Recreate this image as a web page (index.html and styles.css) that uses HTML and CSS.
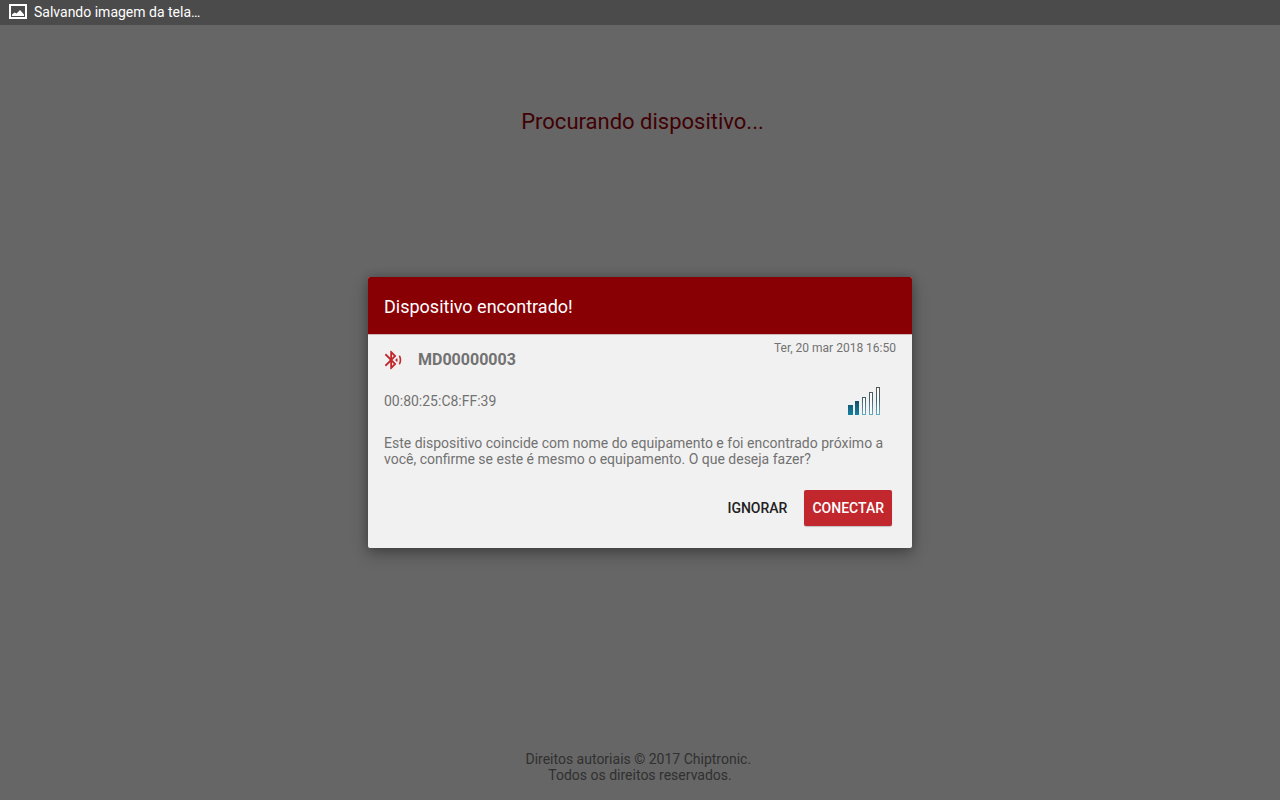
FILE: index.html
```
<!DOCTYPE html>
<html lang="pt-BR">
<head>
    <meta charset="UTF-8">
    <meta name="viewport" content="width=device-width, initial-scale=1.0">
    <title>Procurando dispositivo</title>
    <link rel="stylesheet" href="styles.css">
</head>
<body>
    <div class="status-bar">
        <svg class="status-icon" viewBox="0 0 18 15" aria-hidden="true">
            <rect x="1" y="1" width="16" height="13" fill="none" stroke="#fff" stroke-width="2"/>
            <path d="M3 12V10.500l2.500-2 2 1L11 6l4 4.500V12z" fill="#fff"/>
        </svg>
        <span>Salvando imagem da tela…</span>
    </div>
    <div class="tela">
        <h1 class="procurando">Procurando dispositivo...</h1>
        <footer class="rodape">Direitos autoriais © 2017 Chiptronic.&nbsp;<br>Todos os direitos reservados.</footer>

        <div class="fundo">
            <div class="dialogo" role="dialog" aria-labelledby="titulo">
                <h2 class="titulo" id="titulo">Dispositivo encontrado!</h2>
                <div class="conteudo">
                    <div class="linha">
                        <div class="dispositivo">
                            <svg class="bluetooth" viewBox="0 0 24 24" aria-hidden="true">
                                <path d="M14.24 12.01l2.32 2.32c.28-.72.44-1.51.44-2.33 0-.82-.16-1.59-.43-2.31l-2.33 2.32zm5.29-5.3l-1.26 1.26c.63 1.21.98 2.57.98 4.02s-.36 2.82-.98 4.02l1.2 1.2c.97-1.54 1.54-3.36 1.54-5.31-.01-1.89-.55-3.67-1.48-5.19zm-3.82 1L10 2H9v7.59L4.41 5 3 6.41 8.59 12 3 17.59 4.41 19 9 14.41V22h1l5.71-5.71-4.3-4.29 4.3-4.29zM11 5.83l1.88 1.88L11 9.59V5.83zm1.88 10.46L11 18.17v-3.76l1.88 1.88z" fill="#c1272d"/>
                            </svg>
                            <strong>MD00000003</strong>
                        </div>
                        <time class="data" datetime="2018-03-20T16:50">Ter, 20 mar 2018 16:50</time>
                    </div>
                    <div class="linha endereco">
                        <span>00:80:25:C8:FF:39</span>
                        <svg class="sinal" viewBox="0 0 32 28" role="img" aria-label="Sinal 2 de 5">
                            <defs>
                                <linearGradient id="azul" gradientUnits="userSpaceOnUse" x1="0" y1="12" x2="0" y2="28">
                                    <stop offset="0" stop-color="#10465a"/>
                                    <stop offset="1" stop-color="#1682a5"/>
                                </linearGradient>
                                <linearGradient id="contorno" gradientUnits="userSpaceOnUse" x1="0" y1="0" x2="0" y2="28">
                                    <stop offset="0" stop-color="#555"/>
                                    <stop offset=".45" stop-color="#41606c"/>
                                    <stop offset="1" stop-color="#65adc5"/>
                                </linearGradient>
                            </defs>
                            <g fill="url(#azul)">
                                <rect x="0" y="18" width="5" height="10"/>
                                <rect x="7" y="14" width="4" height="14"/>
                            </g>
                            <g fill="#fafafa" stroke="url(#contorno)">
                                <rect x="14.500" y="10.500" width="3" height="17"/>
                                <rect x="21.500" y="5.500" width="3" height="22"/>
                                <rect x="28.500" y=".5" width="3" height="27"/>
                            </g>
                        </svg>
                    </div>
                    <p class="mensagem">Este dispositivo coincide com nome do equipamento e foi encontrado próximo a você, confirme se este é mesmo o equipamento. O que deseja fazer?</p>
                    <div class="botoes">
                        <button type="button">IGNORAR</button>
                        <button type="button" class="conectar">CONECTAR</button>
                    </div>
                </div>
            </div>
        </div>
    </div>
</body>
</html>
```
FILE: styles.css
```
* {
    box-sizing: border-box;
}

body {
    margin: 0;
    min-height: 100vh;
    display: flex;
    flex-direction: column;
    background-color: #666;
    font-family: Roboto, "Liberation Sans", sans-serif;
    font-size: 14px;
    line-height: 16px;
}

.status-bar {
    display: flex;
    align-items: center;
    gap: 7px;
    height: 25px;
    padding: 0 9px 2px;
    background-color: #4b4b4b;
    color: #fff;
}

.status-icon {
    width: 18px;
    height: 15px;
}

.tela {
    position: relative;
    flex: 1;
    display: flex;
    flex-direction: column;
    justify-content: space-between;
    text-align: center;
}

.procurando {
    margin: 84px 0 0;
    padding-left: 5px;
    font-size: 22px;
    font-weight: 400;
    line-height: 26px;
    color: #400004;
}

.rodape {
    padding-bottom: 17px;
    color: #303030;
}

/* Camada do diálogo sobre a tela */
.fundo {
    position: absolute;
    inset: 0;
    display: flex;
    align-items: center;
    justify-content: center;
}

.dialogo {
    width: 544px;
    max-width: 100%;
    border-radius: 2px;
    overflow: hidden;
    background-color: #f1f1f1;
    color: #727272;
    text-align: left;
    box-shadow: 0 6px 16px rgba(0, 0, 0, 0.3), 0 0 10px rgba(0, 0, 0, 0.2);
}

.titulo {
    margin: 0;
    padding: 18px 16px 15px;
    border-bottom: 1px solid #d0b8b8;
    background-color: #880004;
    color: #fff;
    font-size: 18px;
    font-weight: 400;
    line-height: 24px;
}

.conteudo {
    padding: 5px 16px 22px;
}

.linha {
    display: flex;
    justify-content: space-between;
}

.dispositivo {
    display: flex;
    align-items: center;
    gap: 14px;
    padding-top: 9px;
    font-size: 16px;
    line-height: 18px;
}

.bluetooth {
    width: 22px;
    height: 22px;
    margin-left: -2px;
}

.data {
    font-size: 12px;
}

.endereco {
    align-items: center;
    padding: 16px 16px 0 0;
}

.sinal {
    width: 32px;
    height: 28px;
}

.mensagem {
    margin: 20px 0 23px;
}

.botoes {
    display: flex;
    justify-content: flex-end;
    gap: 9px;
    padding-right: 4px;
}

button {
    height: 36px;
    padding: 0 8px;
    border: none;
    border-radius: 2px;
    background: none;
    color: #212121;
    font-family: inherit;
    font-size: 14px;
    font-weight: 500;
    cursor: pointer;
}

.conectar {
    background-color: #c1272d;
    color: #fff;
    box-shadow: 0 1px 1px rgba(0, 0, 0, 0.2);
}
```
